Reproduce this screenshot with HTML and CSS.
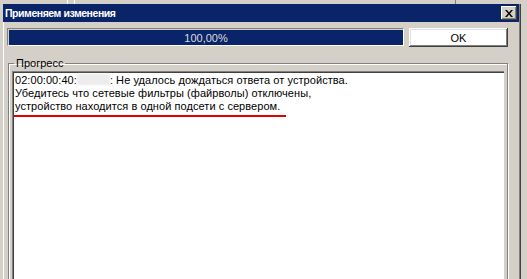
FILE: index.html
```html
<!DOCTYPE html>
<html lang="ru">
<head>
  <meta charset="UTF-8" />
  <title>Применяем изменения</title>
  <link rel="stylesheet" href="styles.css">
</head>
<body>

<div class="desk">
  <span class="desk-line l1"></span>
  <span class="desk-line l2"></span>
  <span class="desk-line l3"></span>
</div>

<div class="window">
  <div class="titlebar">
    <span class="title">Применяем изменения</span>
    <button class="close" aria-label="Закрыть">
      <svg width="8" height="7" viewBox="0 0 8 7">
        <path d="M0 0h2l2 2.5L6 0h2L5 3.5 8 7H6L4 4.5 2 7H0l3-3.5z" fill="#000"/>
      </svg>
    </button>
  </div>

  <div class="content">
    <div class="toprow">
      <div class="progress">
        <div class="progress-fill">100,00%</div>
      </div>
      <button class="btn">OK</button>
    </div>

    <fieldset class="group">
      <legend>Прогресс</legend>
      <div class="log">
        <div>02:00:00:40:<span class="masked"></span>: Не удалось дождаться ответа от устройства.</div>
        <div>Убедитесь что сетевые фильтры (файрволы) отключены,</div>
        <div><span class="marked">устройство находится в одной подсети с сервером.</span></div>
      </div>
    </fieldset>
  </div>
</div>

</body>
</html>
```

FILE: styles.css
```css
body {
  margin: 0;
  background: #d4d0c8;
  font-family: 'Liberation Sans', Arial, sans-serif;
  font-size: 11px;
  color: #000;
  overflow: hidden;
}

.desk {
  height: 4px;
  position: relative;
  background: #d4d0c8;
}

.desk-line {
  position: absolute;
  top: 0;
  width: 1px;
  height: 4px;
}

.desk-line.l1 { left: 67px; background: #fff; }
.desk-line.l2 { left: 74px; background: #fff; }
.desk-line.l3 { left: 455px; background: #808080; }

.window {
  width: 516px;
  height: 275px;
  border-left: 3px solid #d4d0c8;
  box-shadow: inset 1px 0 #fff, 1px 0 #808080, 2px 0 #404040;
  background: #d4d0c8;
  position: relative;
}

.titlebar {
  height: 18px;
  background: #0a246a;
  display: flex;
  align-items: center;
  justify-content: space-between;
  padding: 0 2px 0 2px;
}

.title {
  color: #fff;
  font-weight: bold;
  font-size: 10.5px;
  letter-spacing: -0.45px;
}

.close {
  width: 16px;
  height: 14px;
  padding: 0;
  margin: 0;
  background: #d4d0c8;
  border: none;
  box-shadow: inset -1px -1px #404040, inset 1px 1px #fff, inset -2px -2px #808080;
  display: flex;
  align-items: center;
  justify-content: center;
}

.content {
  padding: 6px 11px 0 4px;
}

.toprow {
  display: flex;
  gap: 5px;
  height: 19px;
}

.progress {
  width: 397px;
  height: 18px;
  box-sizing: border-box;
  border-top: 1px solid #808080;
  border-left: 1px solid #808080;
  border-bottom: 1px solid #fff;
  border-right: 1px solid #fff;
  padding: 1px 0 0 1px;
}

.progress-fill {
  height: 100%;
  background: #0a246a;
  color: #dcdcdc;
  text-align: center;
  line-height: 16px;
}

.btn {
  width: 99px;
  height: 19px;
  padding: 0;
  background: #fff;
  border: none;
  box-shadow: inset -1px -1px #404040, inset 1px 1px #fff, inset -2px -2px #808080, inset 2px 2px #e0e0e0;
  font-family: inherit;
  font-size: 11px;
  color: #000;
}

.group {
  margin: 10px 0 0 1px;
  padding: 1px 3px 0 3px;
  border: 1px solid #808080;
  box-shadow: inset 1px 1px #fff, 1px 1px #fff;
  height: 260px;
}

.group legend {
  padding: 0 2px;
  margin-left: 2px;
  line-height: 13px;
}

.log {
  background: #fff;
  height: 240px;
  border-top: 1px solid #808080;
  border-left: 1px solid #808080;
  box-shadow: inset 1px 1px #404040;
  padding: 2px 2px;
  line-height: 13px;
  letter-spacing: 0.06px;
}

.masked {
  display: inline-block;
  width: 33px;
  height: 11px;
  vertical-align: -1px;
  background: #ececec;
  filter: blur(1px);
}

.marked {
  position: relative;
}

.marked::after {
  content: "";
  position: absolute;
  left: -1px;
  right: -6px;
  bottom: -5px;
  height: 2px;
  background: #e00000;
}
```
